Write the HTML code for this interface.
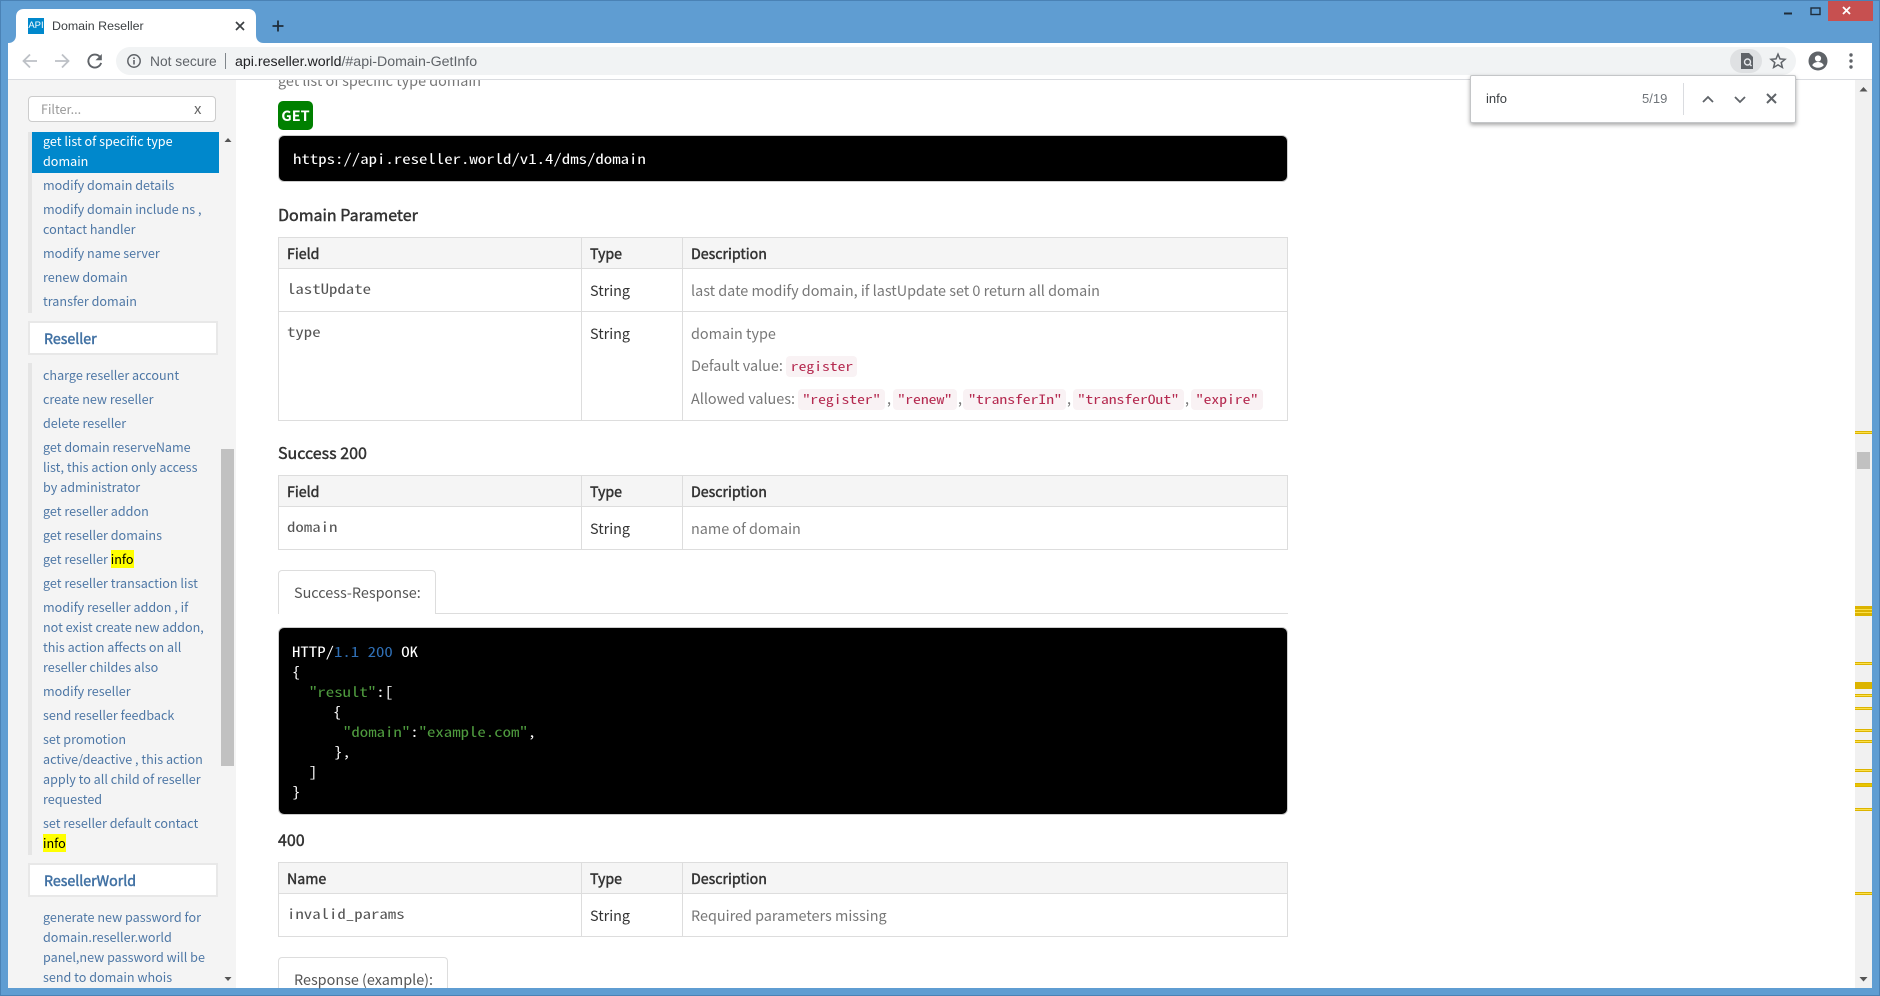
<!DOCTYPE html>
<html><head><meta charset="utf-8"><title>Domain Reseller</title>
<style>
html,body{margin:0;padding:0;width:1880px;height:996px;overflow:hidden;background:#5f9dd2}
*{box-sizing:border-box}
.a{position:absolute}
.t{position:absolute;white-space:nowrap;line-height:20px;height:20px}
.ss{font-family:"Noto Sans CJK SC","Noto Sans CJK JP","Liberation Sans",sans-serif}
.mono{font-family:"Noto Sans Mono CJK SC","DejaVu Sans Mono","Liberation Mono",monospace}
.t.mono{transform:scaleX(1.2);transform-origin:0 50%}
.ui{font-family:"Liberation Sans",sans-serif}
#side .t{font-size:12.6px;color:#4f78a6;left:43px;font-family:"Noto Sans CJK SC","Liberation Sans",sans-serif}
#side .bx{position:absolute;left:28px;width:190px;height:34px;background:#fff;border:2px solid #e8e8e8}
#side .h{position:absolute;left:44px;font-size:14.2px;color:#4272a4;line-height:30px;white-space:nowrap;font-family:"Noto Sans CJK SC","Liberation Sans",sans-serif;-webkit-text-stroke:.5px #4272a4}
mark{background:#ff0;color:#000;display:inline-block;line-height:18px}
.tbl{position:absolute;left:278px;width:1010px;border:1px solid #ddd;background:#fff}
.hd{position:absolute;left:0;right:0;top:0;height:31px;background:#f5f5f5;border-bottom:1px solid #ddd}
.v{position:absolute;top:0;bottom:0;width:1px;background:#ddd}
.m{color:#333;font-size:14.4px}
.g{color:#777;font-size:14.4px}
.b{color:#333;font-size:14.2px;-webkit-text-stroke:.45px #333}
.h4{color:#333;font-size:16px;-webkit-text-stroke:.45px #333}
.c{font-size:14px;color:#555}
.cd{position:absolute;height:21px;background:#f9f2f4;border-radius:4px;color:#b52a50;font-size:13px;line-height:20px;text-align:center;white-space:nowrap}
.cd span{display:inline-block;transform:scaleX(1.2)}
.pre{position:absolute;left:278px;width:1010px;background:#000;border:1px solid #ccc;border-radius:6px}
.l{color:#fff;font-size:14px}
.mk{position:absolute;left:1855px;width:17px;height:3px;background:#fce04a;border-top:1px solid #dcb400;border-bottom:1px solid #dcb400}
</style></head><body>
<!-- window frame -->
<div class="a" style="left:0;top:0;width:1880px;height:996px;background:#5f9dd2;border:1px solid #4a82b5"></div>
<div class="a" style="left:1828px;top:1px;width:45px;height:20px;background:#c75050"></div>
<svg class="a" style="left:1780px;top:0" width="100" height="24"><rect x="4" y="12.5" width="8" height="2" fill="#1f2d3a"/><rect x="31" y="8" width="9" height="6.5" fill="none" stroke="#1f2d3a" stroke-width="1.4"/><path d="M63 7l7 7M70 7l-7 7" stroke="#fff" stroke-width="1.8"/></svg>
<!-- tab -->
<svg class="a" style="left:8px;top:9px" width="258" height="34"><path d="M0 34C6 34 8 30 8 26V8C8 3 11 0 16 0H240C245 0 248 3 248 8V26C248 30 250 34 256 34Z" fill="#fff"/></svg>
<div class="a ui" style="left:28px;top:18px;width:16px;height:16px;background:#0088cc;color:#fff;font-size:9.5px;line-height:16px;text-align:center;overflow:hidden">API</div>
<div class="t ui" style="left:52px;top:16px;font-size:12.4px;color:#3c4043">Domain Reseller</div>
<svg class="a" style="left:234px;top:20px" width="12" height="12"><path d="M2 2l8 8M10 2l-8 8" stroke="#3c4043" stroke-width="1.7"/></svg>
<svg class="a" style="left:271px;top:19px" width="14" height="14"><path d="M7 1.5v11M1.5 7h11" stroke="#1f2d3a" stroke-width="1.8"/></svg>
<!-- toolbar -->
<div class="a" style="left:8px;top:43px;width:1864px;height:37px;background:#fff;border-bottom:1px solid #dadce0"></div>
<svg class="a" style="left:20px;top:50px" width="90" height="22"><g fill="none" stroke="#bdc1c6" stroke-width="1.8"><path d="M17 11H4M10 4.5L3.5 11l6.5 6.5"/><path d="M35 11h13M42 4.5l6.5 6.5-6.5 6.5"/></g><path d="M79.5 6.5a6.5 6.5 0 1 0 1.6 6.4" fill="none" stroke="#5f6368" stroke-width="1.9"/><path d="M75.5 10.2h6.3V4z" fill="#5f6368"/></svg>
<div class="a" style="left:116px;top:47px;width:1680px;height:28px;background:#f1f3f4;border-radius:14px"></div>
<svg class="a" style="left:126px;top:53px" width="16" height="16"><circle cx="8" cy="8" r="6.2" fill="none" stroke="#5f6368" stroke-width="1.5"/><rect x="7.2" y="7" width="1.6" height="4.5" fill="#5f6368"/><rect x="7.2" y="4.4" width="1.6" height="1.6" fill="#5f6368"/></svg>
<div class="t ui" style="left:150px;top:52px;font-size:13.8px;color:#5f6368">Not secure</div>
<div class="a" style="left:225px;top:53px;width:1px;height:16px;background:#80868b"></div>
<div class="t ui" style="left:235px;top:52px;font-size:14.2px;color:#5f6368"><span style="color:#202124">api.reseller.world</span>/#api-Domain-GetInfo</div>
<div class="a" style="left:1730px;top:49px;width:32px;height:24px;background:#dfe1e3;border-radius:12px"></div>
<svg class="a" style="left:1738px;top:52px" width="18" height="18"><path d="M3 1h8l4 4v12H3z" fill="#5f6368"/><circle cx="9.5" cy="10" r="3" fill="none" stroke="#e8eaed" stroke-width="1.4"/><path d="M11.5 12l2 2" stroke="#e8eaed" stroke-width="1.4"/></svg>
<svg class="a" style="left:1769px;top:52px" width="18" height="18"><path d="M9 2.2l2 4.7 5 .4-3.8 3.3 1.2 4.9L9 12.9l-4.400 2.600 1.200-4.900L2 7.300l5-.4z" fill="none" stroke="#5f6368" stroke-width="1.5"/></svg>
<svg class="a" style="left:1808px;top:51px" width="20" height="20"><circle cx="10" cy="10" r="9.500" fill="#5f6368"/><circle cx="10" cy="7.500" r="3.100" fill="#fff"/><path d="M4.200 14.300c1-2.300 3.500-3.300 5.800-3.300s4.800 1 5.800 3.300C14.300 16.100 12.200 16.800 10 16.800s-4.300-.7-5.800-2.500z" fill="#fff"/></svg>
<svg class="a" style="left:1846px;top:53px" width="10" height="16"><circle cx="5" cy="2" r="1.700" fill="#5f6368"/><circle cx="5" cy="8" r="1.700" fill="#5f6368"/><circle cx="5" cy="14" r="1.700" fill="#5f6368"/></svg>

<!-- page -->
<div class="a" style="left:8px;top:80px;width:1864px;height:908px;background:#fff;overflow:hidden"></div>
<div id="side" class="a" style="left:0;top:0;width:236px;height:988px;overflow:hidden">
<div class="a" style="left:8px;top:80px;width:228px;height:908px;background:#f4f4f4"></div>
<div class="a" style="left:28px;top:96px;width:188px;height:26px;background:#fff;border:1px solid #ccc;border-radius:4px"></div>
<div class="t" style="left:41px;top:99px;color:#999">Filter...</div>
<div class="t" style="left:194px;top:99px;color:#666;font-size:15px">x</div>
<div class="a" style="left:28px;top:132px;width:4px;height:181px;background:#e5e5e5"></div>
<div class="a" style="left:28px;top:363px;width:4px;height:492px;background:#e5e5e5"></div>
<div class="a" style="left:32px;top:132px;width:187px;height:41px;background:#08c"></div>
<div class="t" style="top:131px;color:#fff">get list of specific type</div>
<div class="t" style="top:151px;color:#fff">domain</div>
<div class="t" style="top:175px">modify domain details</div>
<div class="t" style="top:199px">modify domain include ns ,</div>
<div class="t" style="top:219px">contact handler</div>
<div class="t" style="top:243px">modify name server</div>
<div class="t" style="top:267px">renew domain</div>
<div class="t" style="top:291px">transfer domain</div>
<div class="bx" style="top:321px"></div><div class="h" style="top:324px">Reseller</div>
<div class="t" style="top:365px">charge reseller account</div>
<div class="t" style="top:389px">create new reseller</div>
<div class="t" style="top:413px">delete reseller</div>
<div class="t" style="top:437px">get domain reserveName</div>
<div class="t" style="top:457px">list, this action only access</div>
<div class="t" style="top:477px">by administrator</div>
<div class="t" style="top:501px">get reseller addon</div>
<div class="t" style="top:525px">get reseller domains</div>
<div class="t" style="top:549px">get reseller <mark>info</mark></div>
<div class="t" style="top:573px">get reseller transaction list</div>
<div class="t" style="top:597px">modify reseller addon , if</div>
<div class="t" style="top:617px">not exist create new addon,</div>
<div class="t" style="top:637px">this action affects on all</div>
<div class="t" style="top:657px">reseller childes also</div>
<div class="t" style="top:681px">modify reseller</div>
<div class="t" style="top:705px">send reseller feedback</div>
<div class="t" style="top:729px">set promotion</div>
<div class="t" style="top:749px">active/deactive , this action</div>
<div class="t" style="top:769px">apply to all child of reseller</div>
<div class="t" style="top:789px">requested</div>
<div class="t" style="top:813px">set reseller default contact</div>
<div class="t" style="top:833px"><mark>info</mark></div>
<div class="bx" style="top:863px"></div><div class="h" style="top:866px">ResellerWorld</div>
<div class="t" style="top:907px">generate new password for</div>
<div class="t" style="top:927px">domain.reseller.world</div>
<div class="t" style="top:947px">panel,new password will be</div>
<div class="t" style="top:967px">send to domain whois</div>
<div class="a" style="left:221px;top:449px;width:13px;height:317px;background:#c1c1c1"></div>
<svg class="a" style="left:223px;top:136px" width="10" height="8"><path d="M1.500 6h7L5 2z" fill="#555"/></svg>
<svg class="a" style="left:223px;top:975px" width="10" height="8"><path d="M1.500 2h7L5 6z" fill="#555"/></svg>
</div>

<!-- main -->
<div class="a" style="left:236px;top:80px;width:1619px;height:908px;overflow:hidden">
<div class="t ss g" style="left:42px;top:-9px">get list of specific type domain</div>
</div>
<div class="a ss" style="left:278px;top:101px;width:35px;height:29px;background:#008000;border-radius:5px;color:#fff;font-weight:700;font-size:14.4px;line-height:29px;text-align:center">GET</div>
<div class="pre" style="top:135px;height:47px"></div>
<div class="t mono l" style="left:293px;top:149px">https://api.reseller.world/v1.4/dms/domain</div>
<div class="t ss h4" style="left:278px;top:204px">Domain Parameter</div>

<div class="tbl" style="top:237px;height:184px"><div class="hd"></div><div class="v" style="left:302px"></div><div class="v" style="left:403px"></div><div class="a" style="left:0;right:0;top:73px;height:1px;background:#ddd"></div></div>
<div class="t ss b" style="left:287px;top:244px">Field</div><div class="t ss b" style="left:590px;top:244px">Type</div><div class="t ss b" style="left:691px;top:244px">Description</div>
<div class="t mono c" style="left:287px;top:279px">lastUpdate</div><div class="t ss m" style="left:590px;top:281px">String</div>
<div class="t ss g" style="left:691px;top:281px">last date modify domain, if lastUpdate set 0 return all domain</div>
<div class="t mono c" style="left:287px;top:322px">type</div><div class="t ss m" style="left:590px;top:324px">String</div>
<div class="t ss g" style="left:691px;top:324px">domain type</div>
<div class="t ss g" style="left:691px;top:356px">Default value:</div>
<div class="cd mono" style="left:786px;top:356px;width:71px"><span>register</span></div>
<div class="t ss g" style="left:691px;top:389px">Allowed values:</div>
<div class="cd mono" style="left:798px;top:389px;width:87px"><span>"register"</span></div><div class="t ss g" style="left:887px;top:389px">,</div>
<div class="cd mono" style="left:893px;top:389px;width:64px"><span>"renew"</span></div><div class="t ss g" style="left:958px;top:389px">,</div>
<div class="cd mono" style="left:963px;top:389px;width:103px"><span>"transferIn"</span></div><div class="t ss g" style="left:1067px;top:389px">,</div>
<div class="cd mono" style="left:1073px;top:389px;width:111px"><span>"transferOut"</span></div><div class="t ss g" style="left:1185px;top:389px">,</div>
<div class="cd mono" style="left:1191px;top:389px;width:72px"><span>"expire"</span></div>

<div class="t ss h4" style="left:278px;top:442px">Success 200</div>
<div class="tbl" style="top:475px;height:75px"><div class="hd"></div><div class="v" style="left:302px"></div><div class="v" style="left:403px"></div></div>
<div class="t ss b" style="left:287px;top:482px">Field</div><div class="t ss b" style="left:590px;top:482px">Type</div><div class="t ss b" style="left:691px;top:482px">Description</div>
<div class="t mono c" style="left:287px;top:517px">domain</div><div class="t ss m" style="left:590px;top:519px">String</div><div class="t ss g" style="left:691px;top:519px">name of domain</div>

<div class="a" style="left:278px;top:613px;width:1010px;height:1px;background:#ddd"></div>
<div class="a" style="left:278px;top:570px;width:158px;height:44px;background:#fff;border:1px solid #ddd;border-bottom:0;border-radius:4px 4px 0 0"></div>
<div class="t ss" style="left:294px;top:583px;font-size:14.4px;color:#555">Success-Response:</div>
<div class="pre" style="top:627px;height:188px"></div>
<div class="t mono l" style="left:292px;top:642px">HTTP/<span style="color:#2f6fb5">1.1 200</span> OK</div>
<div class="t mono l" style="left:292px;top:662px">{</div>
<div class="t mono l" style="left:309px;top:682px"><span style="color:#4e9a3e">"result"</span>:[</div>
<div class="t mono l" style="left:333px;top:702px">{</div>
<div class="t mono l" style="left:343px;top:722px"><span style="color:#4e9a3e">"domain"</span>:<span style="color:#4e9a3e">"example.com"</span>,</div>
<div class="t mono l" style="left:334px;top:742px">},</div>
<div class="t mono l" style="left:309px;top:762px">]</div>
<div class="t mono l" style="left:292px;top:782px">}</div>

<div class="t ss h4" style="left:278px;top:829px">400</div>
<div class="tbl" style="top:862px;height:75px"><div class="hd"></div><div class="v" style="left:302px"></div><div class="v" style="left:403px"></div></div>
<div class="t ss b" style="left:287px;top:869px">Name</div><div class="t ss b" style="left:590px;top:869px">Type</div><div class="t ss b" style="left:691px;top:869px">Description</div>
<div class="t mono c" style="left:287px;top:904px">invalid_params</div><div class="t ss m" style="left:590px;top:906px">String</div><div class="t ss g" style="left:691px;top:906px">Required parameters missing</div>
<div class="a" style="left:278px;top:957px;width:170px;height:31px;background:#fff;border:1px solid #ddd;border-bottom:0;border-radius:4px 4px 0 0"></div>
<div class="t ss" style="left:294px;top:970px;font-size:14.4px;color:#555">Response (example):</div>

<!-- scrollbar -->
<div class="a" style="left:1855px;top:80px;width:17px;height:908px;background:#f1f1f1"></div>
<div class="a" style="left:1857px;top:452px;width:13px;height:17px;background:#c1c1c1"></div>
<svg class="a" style="left:1858px;top:85px" width="11" height="8"><path d="M1.500 6.500h8L5.500 2z" fill="#555"/></svg>
<svg class="a" style="left:1858px;top:975px" width="11" height="8"><path d="M1.500 2h8L5.500 6.500z" fill="#555"/></svg>
<div class="mk" style="top:431px"></div><div class="mk" style="top:606px;height:10px;background:repeating-linear-gradient(#dcb400 0,#dcb400 2px,#fce04a 2px,#fce04a 3px)"></div>
<div class="mk" style="top:662px"></div><div class="mk" style="top:682px;height:7px;background:#dcb400"></div><div class="mk" style="top:694px"></div><div class="mk" style="top:707px"></div><div class="mk" style="top:729px"></div><div class="mk" style="top:740px"></div><div class="mk" style="top:769px"></div><div class="mk" style="top:783px;height:4px;background:#e8c400"></div><div class="mk" style="top:808px"></div><div class="mk" style="top:892px"></div>

<!-- find bar -->
<div class="a" style="left:1470px;top:75px;width:326px;height:48px;background:#fff;border:1px solid #c4c6c8;border-radius:2px;box-shadow:0 2px 4px rgba(0,0,0,.35)"></div>
<div class="t ui" style="left:1486px;top:89px;font-size:13px;color:#3c4043">info</div>
<div class="t ui" style="left:1642px;top:89px;font-size:13px;color:#70757a">5/19</div>
<div class="a" style="left:1683px;top:83px;width:1px;height:32px;background:#dadce0"></div>
<svg class="a" style="left:1700px;top:90px" width="84" height="18"><path d="M3 12l5-5 5 5" fill="none" stroke="#5f6368" stroke-width="1.800"/><path d="M35 7l5 5 5-5" fill="none" stroke="#5f6368" stroke-width="1.800"/><path d="M67 4l9 9M76 4l-9 9" stroke="#5f6368" stroke-width="2"/></svg>
</body></html>
